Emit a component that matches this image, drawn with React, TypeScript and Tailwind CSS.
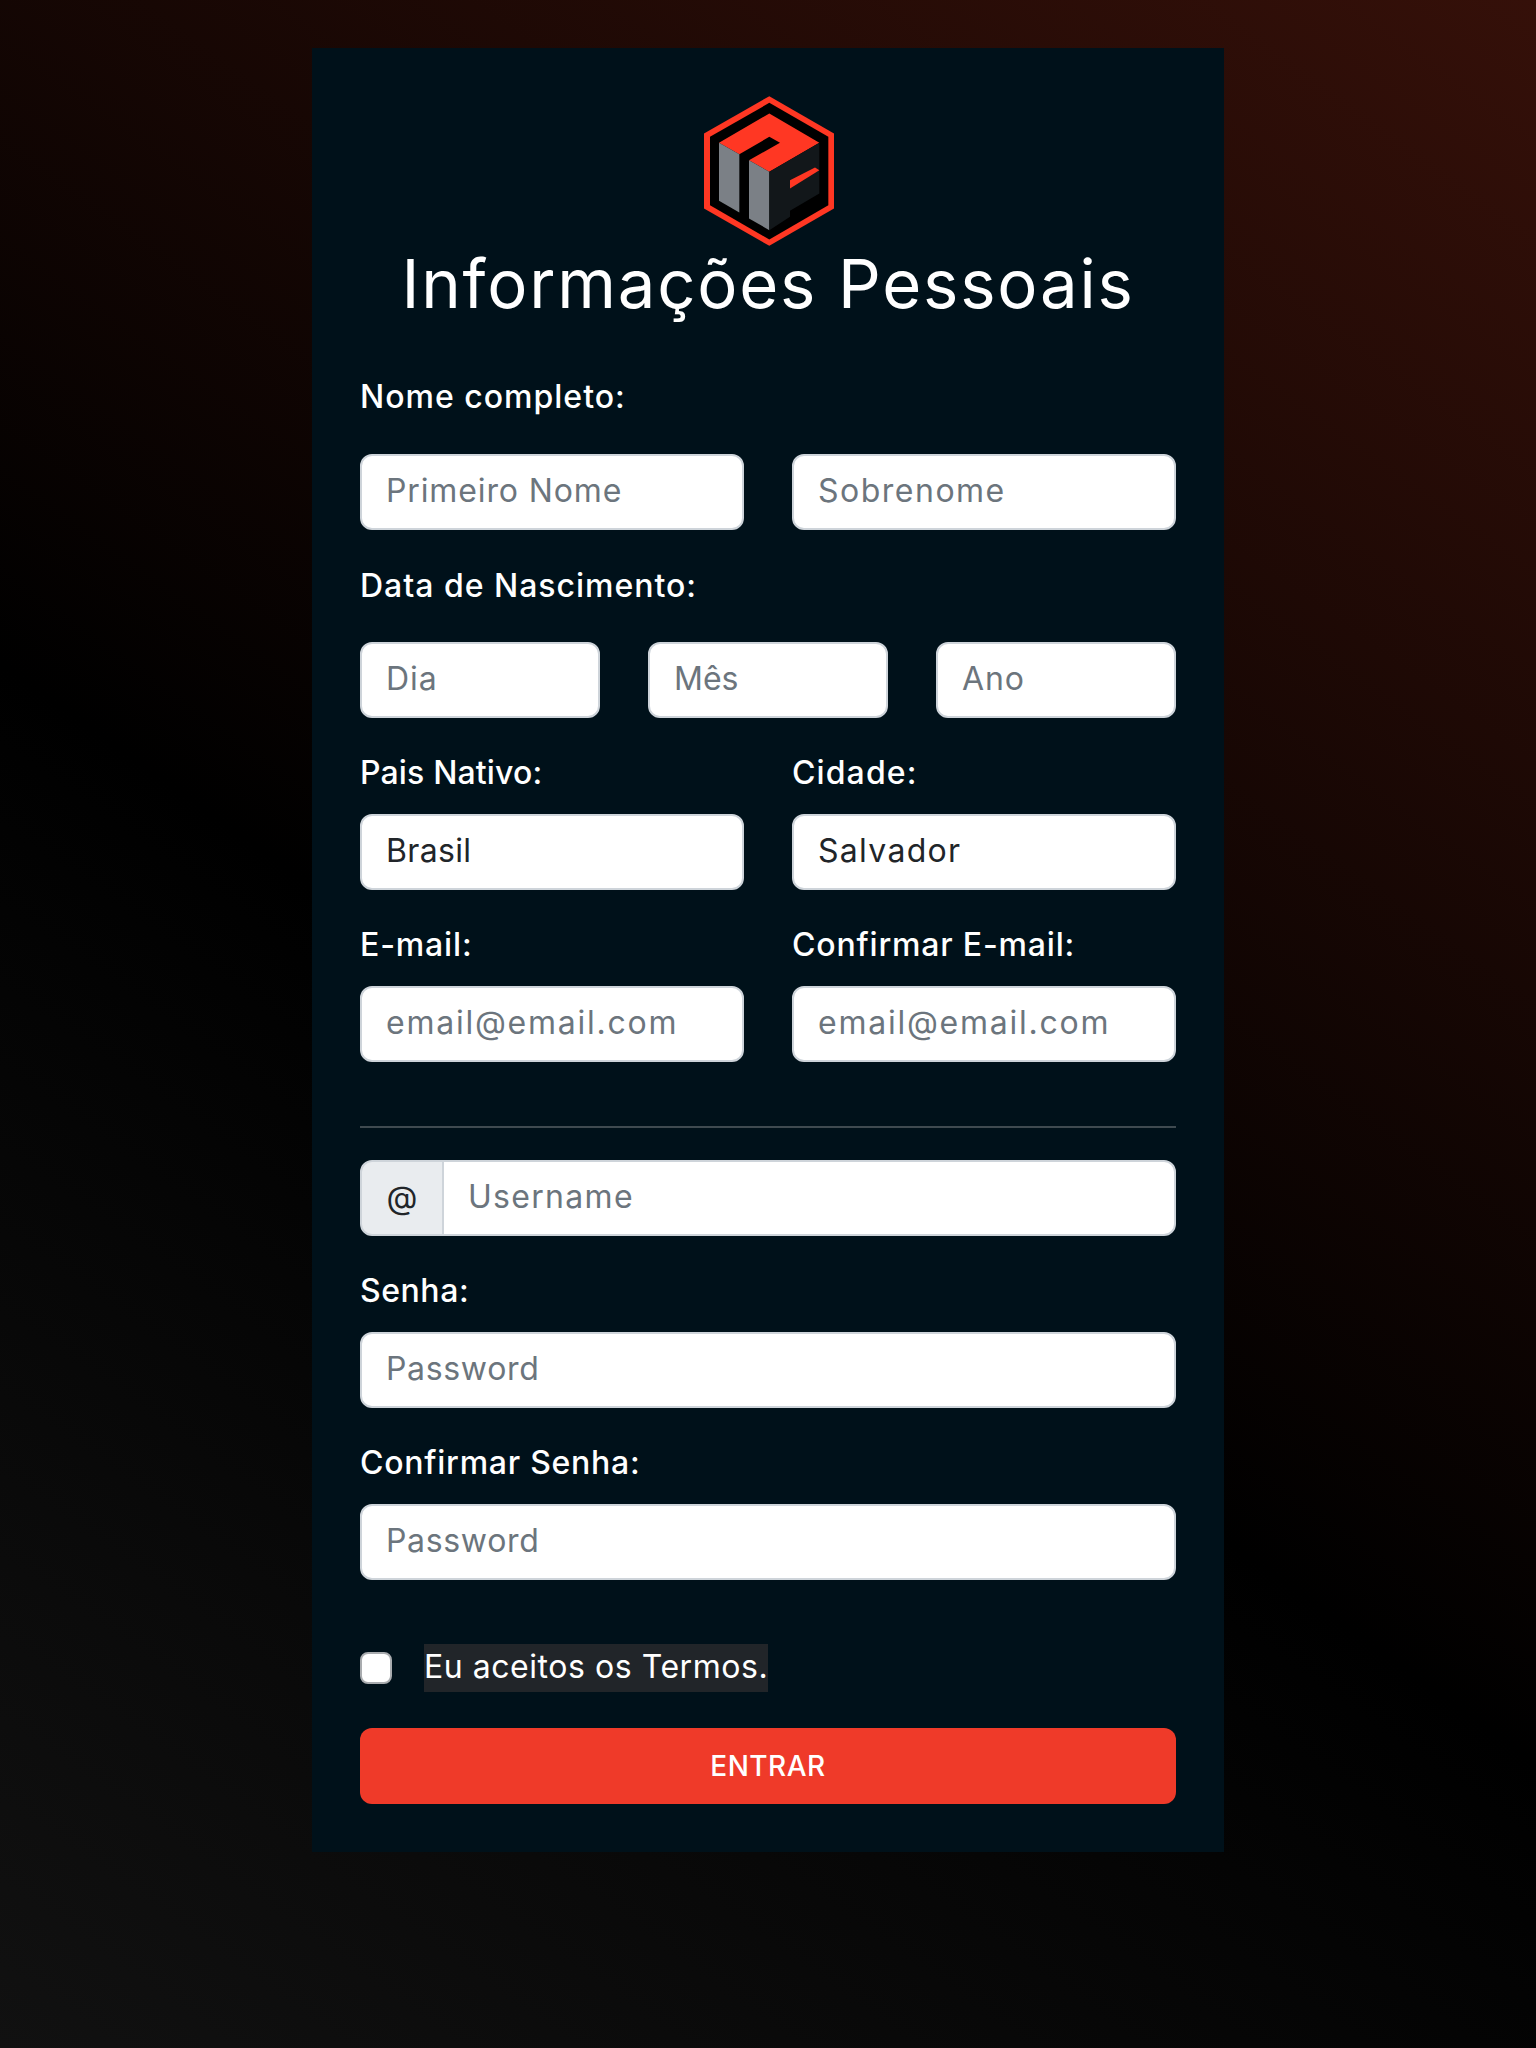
const font = "font-['Inter','Liberation_Sans',sans-serif]";
const inputCls = "block w-full h-[76px] rounded-xl border-2 border-[#ced4da] bg-white pl-[24px] pr-[24px] pb-[3px] text-[32px] text-[#212529] placeholder:text-[#6c757d] outline-none min-w-0";
const labelCls = "block h-12 text-[32px] leading-[50px] font-medium text-white";

function Logo() {
  return (
    <svg viewBox="72 48 390 449" width="130" height="150" className="block ml-[344px]">
      <polygon points="268,48 462,160 462,385 268,497 72,385 72,160" fill="#ff3723" />
      <polygon points="268,68 445,170 445,375 268,478 90,375 90,170" fill="#000" />
      <polygon points="117,188 268,100 418,188 268,275 207,240 300,188 268,170 178,222" fill="#ff3723" />
      <polygon points="117,188 178,222 178,397 117,362" fill="#7b8086" />
      <polygon points="207,240 268,275 268,450 207,415" fill="#7b8086" />
      <polygon points="268,275 418,188 418,340 330,392 330,410 268,450" fill="#12171a" />
      <polygon points="330,300 405,262 418,270 330,325" fill="#ff3723" />
    </svg>
  );
}

export default function App() {
  return (
    <div className={`${font} w-full h-[2048px] bg-[linear-gradient(215.6deg,#351009_0%,#000_56%,#111_100%)] pt-12`}>
      <form className="mx-auto w-[912px] h-[1804px] bg-[#00111a] p-12">
        <Logo />
        <h1 className="text-center text-[67px] leading-[96px] font-normal text-white h-[96px] mt-[-10px] whitespace-nowrap tracking-[1.8px]">Informações Pessoais</h1>

        <label className={`${labelCls} mt-[40px] tracking-[1px]`}>Nome completo:</label>
        <div className="mt-[34px] grid grid-cols-2 gap-12">
          <input className={`${inputCls} tracking-[0.88px]`} placeholder="Primeiro Nome" />
          <input className={`${inputCls} tracking-[1.5px]`} placeholder="Sobrenome" />
        </div>

        <label className={`${labelCls} mt-[31px] tracking-[0.98px]`}>Data de Nascimento:</label>
        <div className="mt-[33px] grid grid-cols-3 gap-12">
          <input className={`${inputCls} tracking-[1px]`} placeholder="Dia" />
          <input className={inputCls} placeholder="Mês" />
          <input className={`${inputCls} tracking-[0.9px]`} placeholder="Ano" />
        </div>

        <div className="mt-[30px] grid grid-cols-2 gap-12">
          <div>
            <label className={`${labelCls} tracking-[0.15px]`}>Pais Nativo:</label>
            <input className={`${inputCls} mt-[18px] tracking-[0.35px]`} defaultValue="Brasil" />
          </div>
          <div>
            <label className={`${labelCls} tracking-[1.1px]`}>Cidade:</label>
            <input className={`${inputCls} mt-[18px] tracking-[1.3px]`} defaultValue="Salvador" />
          </div>
        </div>

        <div className="mt-[30px] grid grid-cols-2 gap-12">
          <div>
            <label className={`${labelCls} tracking-[0.85px]`}>E-mail:</label>
            <input className={`${inputCls} mt-[18px] tracking-[1.75px]`} placeholder="email@email.com" />
          </div>
          <div>
            <label className={`${labelCls} tracking-[0.82px]`}>Confirmar E-mail:</label>
            <input className={`${inputCls} mt-[18px] tracking-[1.75px]`} placeholder="email@email.com" />
          </div>
        </div>

        <hr className="mt-[64px] border-0 h-[2px] bg-[#3f4a50]" />

        <div className="mt-[32px] flex h-[76px]">
          <span className="flex w-[84px] shrink-0 items-center justify-center rounded-l-xl border-2 border-[#ced4da] bg-[#e9ecef] text-[32px] text-[#212529]">@</span>
          <input className={`${inputCls} rounded-l-none ml-[-2px] tracking-[1.3px]`} placeholder="Username" />
        </div>

        <label className={`${labelCls} mt-[30px] tracking-[0.55px]`}>Senha:</label>
        <input className={`${inputCls} mt-[18px] tracking-[0.67px]`} placeholder="Password" />

        <label className={`${labelCls} mt-[30px] tracking-[0.75px]`}>Confirmar Senha:</label>
        <input className={`${inputCls} mt-[18px] tracking-[0.67px]`} placeholder="Password" />

        <div className="mt-[64px] flex items-center gap-8 h-12">
          <span className="block w-8 h-8 rounded-lg bg-white border-2 border-[#a9acaf]"></span>
          <span className="h-12 bg-[#212529] text-[32px] leading-[46px] text-white tracking-[0.54px]">Eu aceitos os Termos.</span>
        </div>

        <button type="button" className="mt-[36px] block w-full h-[76px] rounded-xl bg-[#ef3a29] text-[28px] font-medium text-white tracking-[0.5px]">ENTRAR</button>
      </form>
    </div>
  );
}
